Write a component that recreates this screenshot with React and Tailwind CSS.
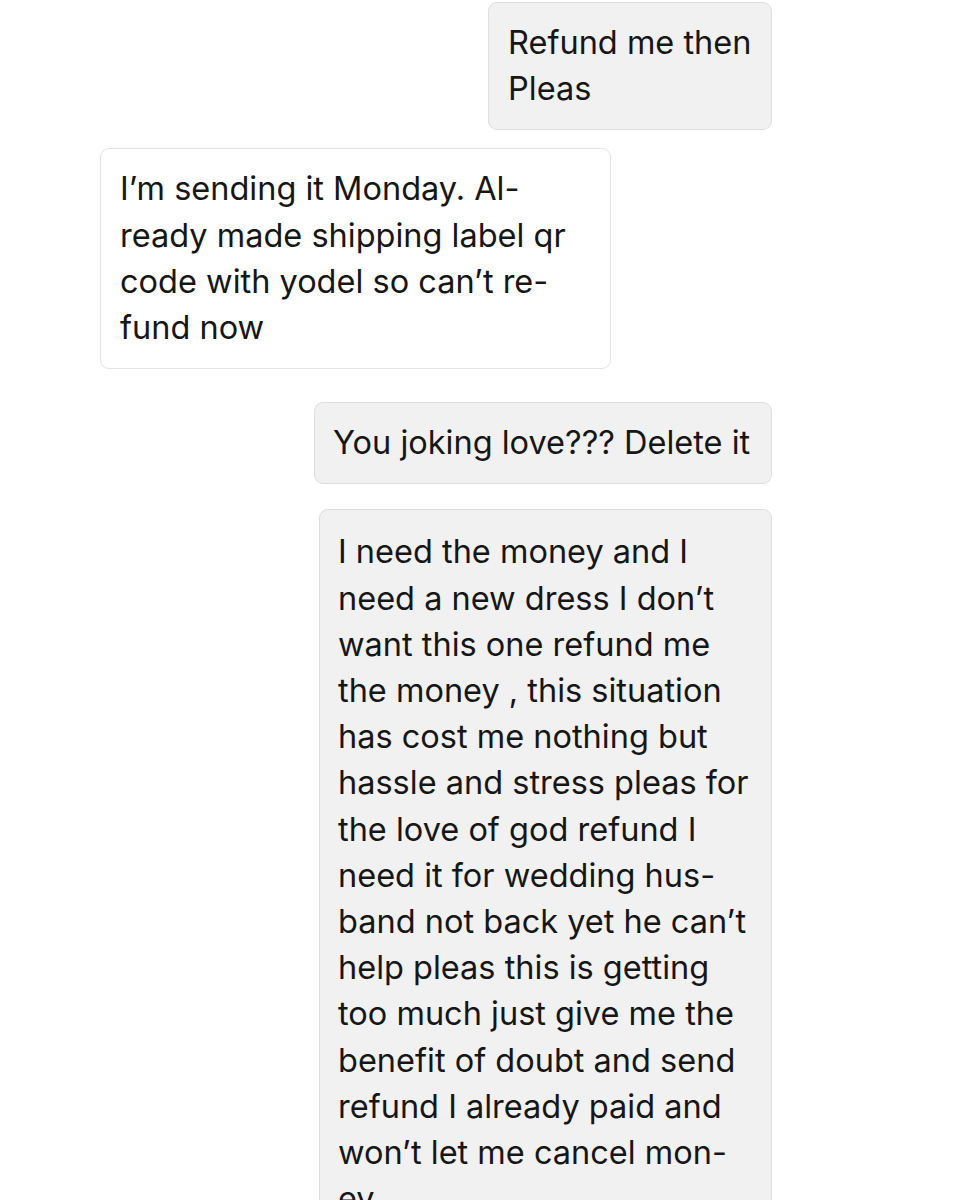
import React from 'react';

const messages = [
  {
    side: 'right',
    width: 'w-[284px]',
    gap: 'mt-[2px]',
    pad: 'pl-[19px] pr-[12px] py-[17px]',
    lines: ['Refund me then', 'Pleas'],
  },
  {
    side: 'left',
    width: 'w-[511px]',
    gap: 'mt-[18px]',
    pad: 'pl-[19px] pr-[12px] py-[17px]',
    lines: [
      'I\u2019m sending it Monday. Al-',
      'ready made shipping label qr',
      'code with yodel so can\u2019t re-',
      'fund now',
    ],
  },
  {
    side: 'right',
    width: 'w-[458px]',
    gap: 'mt-[33px]',
    pad: 'pl-[18px] pr-[12px] py-[17px]',
    lines: ['You joking love??? Delete it'],
  },
  {
    side: 'right',
    width: 'w-[453px]',
    gap: 'mt-[25px]',
    pad: 'pl-[18px] pr-[12px] pt-[19px] pb-[17px]',
    lines: [
      'I need the money and I',
      'need a new dress I don\u2019t',
      'want this one refund me',
      'the money , this situation',
      'has cost me nothing but',
      'hassle and stress pleas for',
      'the love of god refund I',
      'need it for wedding hus-',
      'band not back yet he can\u2019t',
      'help pleas this is getting',
      'too much just give me the',
      'benefit of doubt and send',
      'refund I already paid and',
      'won\u2019t let me cancel mon-',
      'ey.',
    ],
  },
];

const Bubble = ({ side, width, gap, pad, lines }) => {
  const isMine = side === 'right';
  return (
    <div className={`flex ${isMine ? 'justify-end' : 'justify-start'} ${gap}`}>
      <div
        className={`${width} ${pad} rounded-[9px] border ${
          isMine ? 'bg-[#f1f1f1] border-[#dedede]' : 'bg-white border-[#e3e3e3]'
        }`}
      >
        {lines.map((line, i) => (
          <div key={i} className="whitespace-nowrap text-[32.5px] leading-[46.2px] text-[#161616]">
            {line}
          </div>
        ))}
      </div>
    </div>
  );
};

export default function App() {
  return (
    <div
      className="w-[960px] h-[1200px] overflow-hidden bg-white"
      style={{ fontFamily: 'Inter, "Noto Sans", sans-serif' }}
    >
      <div className="flex flex-col pl-[100px] pr-[188px]">
        {messages.map((m, i) => (
          <Bubble key={i} {...m} />
        ))}
      </div>
    </div>
  );
}
